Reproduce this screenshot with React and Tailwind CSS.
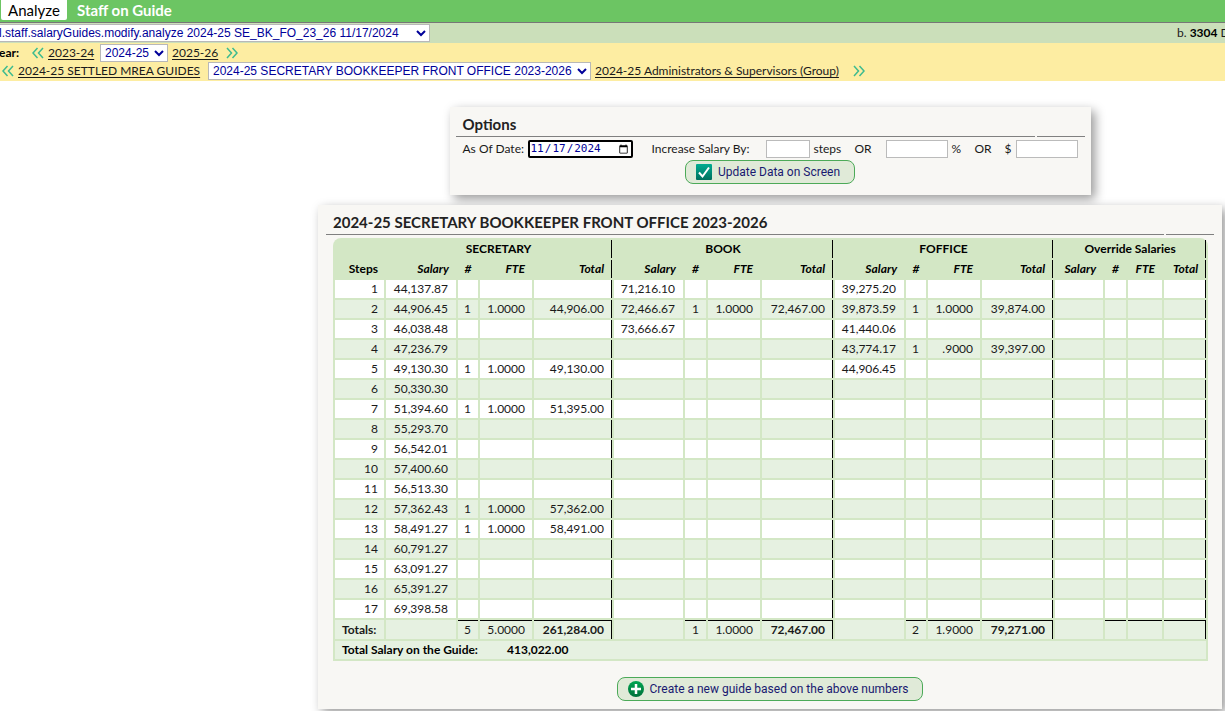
import React, { useState } from 'react';

const groups = [
  { key: 'secretary', name: 'SECRETARY' },
  { key: 'book', name: 'BOOK' },
  { key: 'foffice', name: 'FOFFICE' },
  { key: 'override', name: 'Override Salaries' }
];

const steps = [
  { secretary: ['44,137.87'], book: ['71,216.10'], foffice: ['39,275.20'] },
  {
    secretary: ['44,906.45', '1', '1.0000', '44,906.00'],
    book: ['72,466.67', '1', '1.0000', '72,467.00'],
    foffice: ['39,873.59', '1', '1.0000', '39,874.00']
  },
  { secretary: ['46,038.48'], book: ['73,666.67'], foffice: ['41,440.06'] },
  { secretary: ['47,236.79'], foffice: ['43,774.17', '1', '.9000', '39,397.00'] },
  { secretary: ['49,130.30', '1', '1.0000', '49,130.00'], foffice: ['44,906.45'] },
  { secretary: ['50,330.30'] },
  { secretary: ['51,394.60', '1', '1.0000', '51,395.00'] },
  { secretary: ['55,293.70'] },
  { secretary: ['56,542.01'] },
  { secretary: ['57,400.60'] },
  { secretary: ['56,513.30'] },
  { secretary: ['57,362.43', '1', '1.0000', '57,362.00'] },
  { secretary: ['58,491.27', '1', '1.0000', '58,491.00'] },
  { secretary: ['60,791.27'] },
  { secretary: ['63,091.27'] },
  { secretary: ['65,391.27'] },
  { secretary: ['69,398.58'] }
];

const totals = {
  secretary: ['', '5', '5.0000', '261,284.00'],
  book: ['', '1', '1.0000', '72,467.00'],
  foffice: ['', '2', '1.9000', '79,271.00']
};

const Chevrons = ({ right }) => (
  <svg
    viewBox="0 0 12 12"
    className={right ? 'w-3 h-3 shrink-0 rotate-180' : 'w-3 h-3 shrink-0'}
    fill="none"
    stroke="#3dbb8f"
    strokeWidth="1.5"
  >
    <path d="M5.500 1 1 6l4.500 5M11 1 6.500 6l4.500 5" />
  </svg>
);

const NavLink = ({ children }) => (
  <a href="#" className="underline underline-offset-2 text-[#1a1a1a]">{children}</a>
);

const Panel = ({ title, className, children }) => (
  <section className={`bg-[#f8f7f4] shadow-[4px_4px_10px_rgba(0,0,0,0.4)] ${className}`}>
    <h2 className="h-[29px] pt-1.5 flex items-center text-[15px] font-bold text-[#222]">{title}</h2>
    <div className="flex gap-0.5 -mx-[7px] mb-[3px]">
      <div className="flex-1 h-px bg-[#808080]" />
      <div className="w-12 h-px bg-[#808080]" />
    </div>
    {children}
  </section>
);

const ActionButton = ({ icon, children }) => (
  <button
    type="button"
    className="h-6 pl-2.5 pr-3.5 flex items-center gap-1.5 rounded-lg border border-[#4caa58] bg-[#e0ead8] font-[Roboto,sans-serif] text-[12px] text-[#191970]"
  >
    {icon}
    {children}
  </button>
);

const CheckIcon = () => (
  <svg viewBox="0 0 16 16" className="w-4 h-4">
    <defs>
      <linearGradient id="check" x1="0" y1="0" x2="0" y2="1">
        <stop offset="0" stopColor="#02ac91" />
        <stop offset="1" stopColor="#00705e" />
      </linearGradient>
    </defs>
    <rect width="16" height="16" rx="1" fill="url(#check)" />
    <path d="m3 8.500 3.500 4L13 3.500" fill="none" stroke="#fff" strokeWidth="2" />
  </svg>
);

const PlusIcon = () => (
  <svg viewBox="0 0 16 16" className="w-4 h-4">
    <defs>
      <linearGradient id="plus" x1="0" y1="0" x2="0" y2="1">
        <stop offset="0" stopColor="#00a651" />
        <stop offset="1" stopColor="#00703a" />
      </linearGradient>
    </defs>
    <circle cx="8" cy="8" r="8" fill="url(#plus)" />
    <path d="M8 3v10M3 8h10" stroke="#fff" strokeWidth="2.500" />
  </svg>
);

const GroupCells = ({ values = [], isTotal }) => {
  const top = isTotal ? 'border-t border-black' : '';
  return (
    <>
      <td className="text-right pr-2">{values[0]}</td>
      <td className={`text-right pr-[7px] ${top}`}>{values[1]}</td>
      <td className={`text-right pr-[7px] ${top}`}>{values[2]}</td>
      <td className={`text-right pr-[7px] border-r border-r-black ${top} ${isTotal ? 'font-bold' : ''}`}>{values[3]}</td>
    </>
  );
};

const SalaryTable = () => (
  <table className="w-full table-fixed border-separate border-spacing-[2px] rounded-t-lg bg-[#d3e7c5] text-[12px] leading-[18px] text-[#1a1a1a] [&_td]:h-[18px] [&_th]:h-[18px]">
    <colgroup>
      <col className="w-[49px]" />
      <col className="w-[70px]" />
      <col className="w-[20px]" />
      <col className="w-[52px]" />
      <col className="w-[78px]" />
      <col className="w-[69px]" />
      <col className="w-[21px]" />
      <col className="w-[52px]" />
      <col className="w-[71px]" />
      <col className="w-[69px]" />
      <col className="w-[20px]" />
      <col className="w-[52px]" />
      <col className="w-[71px]" />
      <col className="w-[48px]" />
      <col className="w-[21px]" />
      <col className="w-[34px]" />
      <col className="w-[42px]" />
    </colgroup>
    <thead className="text-black">
      <tr>
        <th />
        {groups.map((group) => (
          <th key={group.key} colSpan={4} className="font-bold text-center border-r border-black">{group.name}</th>
        ))}
      </tr>
      <tr>
        <th className="font-bold text-right pr-1.5">Steps</th>
        {groups.map((group) => (
          <React.Fragment key={group.key}>
            <th className="font-bold italic text-right pr-[7px]">Salary</th>
            <th className="font-bold italic text-center">#</th>
            <th className="font-bold italic text-right pr-[7px]">FTE</th>
            <th className="font-bold italic text-right pr-[7px] border-r border-black">Total</th>
          </React.Fragment>
        ))}
      </tr>
    </thead>
    <tbody>
      {steps.map((step, index) => (
        <tr key={index} className="[&>td]:bg-white even:[&>td]:bg-[#e6f1e1]">
          <td className="text-right pr-1.5">{index + 1}</td>
          {groups.map((group) => (
            <GroupCells key={group.key} values={step[group.key]} />
          ))}
        </tr>
      ))}
    </tbody>
    <tfoot className="[&_td]:bg-[#e6f1e1]">
      <tr>
        <td className="font-bold pl-[7px]">Totals:</td>
        {groups.map((group) => (
          <GroupCells key={group.key} values={totals[group.key]} isTotal />
        ))}
      </tr>
      <tr>
        <td colSpan={17} className="font-bold text-black pl-[7px]">
          <span className="inline-block w-[165px]">Total Salary on the Guide:</span>
          413,022.00
        </td>
      </tr>
    </tfoot>
  </table>
);

const selectClass = 'h-[18px] border border-[#b8b8b8] bg-white font-["Liberation_Sans",sans-serif] text-[12px] text-[#000099]';
const inputClass = 'h-[18px] border border-[#bbb] bg-white px-1';

const App = () => {
  const [date, setDate] = useState('2024-11-17');

  return (
    <div className="min-h-screen overflow-hidden bg-white font-[Lato,sans-serif] text-[12px] text-[#1a1a1a]">
      <nav className="h-[23px] flex items-start bg-[#6cc563] border-b border-[#777] text-[15px] leading-5">
        <a href="#" className="ml-px w-[66px] h-5 text-center bg-white text-black rounded-b-xs">Analyze</a>
        <a href="#" className="ml-2.5 font-bold text-white">Staff on Guide</a>
      </nav>

      <div className="h-5 flex items-center justify-between bg-[#cbdfba] overflow-hidden whitespace-nowrap">
        <select aria-label="Page history" className={`${selectClass} -ml-1.5 w-[436px]`}>
          <option>l.staff.salaryGuides.modify.analyze 2024-25 SE_BK_FO_23_26 11/17/2024</option>
        </select>
        <div className="w-12">b. <b className="text-black">3304</b> D</div>
      </div>

      <div className="h-[38px] bg-[#fdeda2] whitespace-nowrap">
        <div className="h-[19px] flex items-center">
          <label htmlFor="year" className="w-[33px] -ml-px font-bold text-black">ear:</label>
          <Chevrons />
          <div className="w-14 pl-1"><NavLink>2023-24</NavLink></div>
          <select id="year" className={`${selectClass} w-[68px]`}>
            <option>2024-25</option>
          </select>
          <div className="w-[58px] pl-1"><NavLink>2025-26</NavLink></div>
          <Chevrons right />
        </div>
        <div className="h-[18px] flex items-center">
          <div className="pl-0.5"><Chevrons /></div>
          <div className="w-[194px] pl-1"><NavLink>2024-25 SETTLED MREA GUIDES</NavLink></div>
          <select aria-label="Guide" className={`${selectClass} w-[383px]`}>
            <option>2024-25 SECRETARY BOOKKEEPER FRONT OFFICE 2023-2026</option>
          </select>
          <div className="w-[262px] pl-1"><NavLink>2024-25 Administrators &amp; Supervisors (Group)</NavLink></div>
          <Chevrons right />
        </div>
      </div>

      <main className="pt-[26px] pl-[318px] pr-[3px] flex flex-col items-center gap-2.5">
        <Panel title="Options" className="px-[13px] pb-[11px]">
          <form className="flex items-center whitespace-nowrap">
            <label htmlFor="date" className="w-[65px]">As Of Date:</label>
            <input
              id="date"
              type="date"
              value={date}
              onChange={(e) => setDate(e.target.value)}
              className="w-[105px] h-[18px] mr-[19px] rounded-xs border-2 border-black bg-white font-['DejaVu_Sans_Mono',monospace] text-[11px] text-[#000099]"
            />
            <label htmlFor="steps" className="w-[114px]">Increase Salary By:</label>
            <input id="steps" type="text" className={`${inputClass} w-11`} />
            <span className="w-[45px] pl-1">steps</span>
            <label htmlFor="percent" className="w-[31px]">OR</label>
            <input id="percent" type="text" className={`${inputClass} w-[62px]`} />
            <span className="w-[27px] pl-1">%</span>
            <span className="w-[30px]">OR</span>
            <label htmlFor="dollars" className="w-[11px]">$</label>
            <input id="dollars" type="text" className={`${inputClass} w-[62px]`} />
          </form>
          <div className="mt-0.5 flex justify-center">
            <ActionButton icon={<CheckIcon />}>Update Data on Screen</ActionButton>
          </div>
        </Panel>

        <Panel title="2024-25 SECRETARY BOOKKEEPER FRONT OFFICE 2023-2026" className="w-full px-[15px] pb-2">
          <SalaryTable />
          <div className="mt-4 flex justify-center">
            <ActionButton icon={<PlusIcon />}>Create a new guide based on the above numbers</ActionButton>
          </div>
        </Panel>
      </main>
    </div>
  );
};

export default App;
